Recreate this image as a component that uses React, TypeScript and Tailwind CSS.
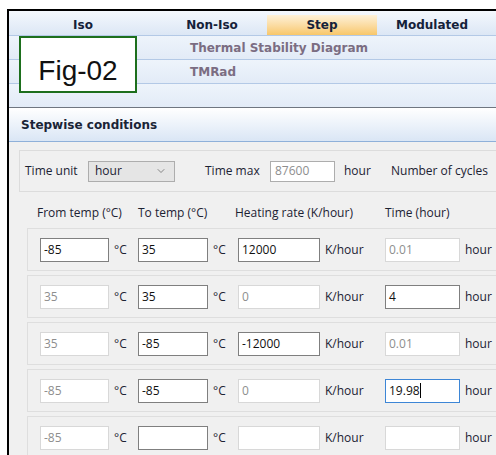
import React from "react";
import { ChevronDown } from "lucide-react";

type FieldState = "on" | "off" | "focus";

interface Field {
  value: string;
  state: FieldState;
}

interface StepRow {
  id: number;
  from: Field;
  to: Field;
  rate: Field;
  time: Field;
}

const f = (value: string, state: FieldState): Field => ({ value, state });

const steps: StepRow[] = [
  { id: 1, from: f("-85", "on"), to: f("35", "on"), rate: f("12000", "on"), time: f("0.01", "off") },
  { id: 2, from: f("35", "off"), to: f("35", "on"), rate: f("0", "off"), time: f("4", "on") },
  { id: 3, from: f("35", "off"), to: f("-85", "on"), rate: f("-12000", "on"), time: f("0.01", "off") },
  { id: 4, from: f("-85", "off"), to: f("-85", "on"), rate: f("0", "off"), time: f("19.98", "focus") },
  { id: 5, from: f("-85", "off"), to: f("", "on"), rate: f("", "off"), time: f("", "off") },
];

const tabs = [
  { label: "Iso", width: "w-[148px]", active: false },
  { label: "Non-Iso", width: "w-[110px]", active: false },
  { label: "Step", width: "w-[110px]", active: true },
  { label: "Modulated", width: "w-[110px]", active: false },
];

const uiFont = "font-['Segoe_UI','Open_Sans',sans-serif]";
const boldFont = "font-['DejaVu_Sans',Verdana,sans-serif] font-bold";

function TextBox({ field, width }: { field: Field; width: string }) {
  const border =
    field.state === "focus"
      ? "border-[#3d86d6]"
      : field.state === "on"
      ? "border-[#7f7f7f]"
      : "border-[#d8d8d8]";
  const color = field.state === "off" ? "text-[#8e8e8e]" : "text-[#111]";
  return (
    <div className={`${width} h-6 shrink-0 border ${border} bg-white flex items-center pl-[3px] text-[12px] ${color}`}>
      <span>{field.value}</span>
      {field.state === "focus" && <span className="w-px h-[15px] bg-black" />}
    </div>
  );
}

function Unit({ text, width }: { text: string; width: string }) {
  return <div className={`${width} shrink-0 pl-[5px] text-[12px] text-[#1c2233]`}>{text}</div>;
}

export default function App() {
  return (
    <div className={`w-[496px] h-[455px] overflow-hidden bg-white pl-[7px] pt-[9px] ${uiFont}`}>
      <div className="relative h-full border-l-2 border-t-2 border-black bg-[#f0f0f0]">
        {/* tab strip */}
        <div className="flex h-6 pt-1 bg-gradient-to-b from-[#f4f8fd] to-[#dce7f5]">
          {tabs.map((t) => (
            <div
              key={t.label}
              className={`${t.width} h-5 flex items-center justify-center text-[12px] text-[#15223a] ${boldFont} ${
                t.active ? "bg-gradient-to-b from-[#fdf1d8] to-[#f8c769]" : ""
              }`}
            >
              {t.label}
            </div>
          ))}
        </div>

        {/* diagram list */}
        {["Thermal Stability Diagram", "TMRad", ""].map((label, i) => (
          <div
            key={i}
            className="h-6 border-t border-[#b3c9e6] bg-gradient-to-b from-[#eef4fb] to-[#e2ebf7] pl-[181px] flex items-center"
          >
            <span className={`text-[12px] text-[#7b6d82] ${boldFont}`}>{label}</span>
          </div>
        ))}

        {/* section header */}
        <div className="h-[35px] border-t border-[#6f7680] border-b border-b-[#8fb0d9] bg-gradient-to-b from-white to-[#dae6f5] pl-3 flex items-center">
          <span className={`text-[12px] text-[#1a2436] ${boldFont}`}>Stepwise conditions</span>
        </div>

        {/* time settings */}
        <div className="ml-[10px] mt-2 w-[520px] h-[42px] border border-[#dcdcdc] flex items-center pl-[5px] text-[12px] text-[#1c2233]">
          <span className="w-[63px] shrink-0">Time unit</span>
          <div className="w-[87px] h-[21px] shrink-0 border border-[#adadad] bg-[#e5e5e5] flex items-center justify-between pl-[6px] pr-[7px]">
            <span>hour</span>
            <ChevronDown size={12} strokeWidth={1.5} className="text-[#666]" />
          </div>
          <span className="ml-[30px] w-[65px] shrink-0">Time max</span>
          <div className="w-[65px] h-[21px] shrink-0 border border-[#adadad] bg-white flex items-center pl-[4px] text-[#8e8e8e]">
            87600
          </div>
          <span className="ml-[9px] w-[47px] shrink-0">hour</span>
          <span className="shrink-0">Number of cycles</span>
        </div>

        {/* column headings */}
        <div className="flex mt-3 h-[18px] items-center pl-[28px] text-[12px] text-[#1c2233]">
          <span className="w-[101px] shrink-0">From temp (°C)</span>
          <span className="w-[97px] shrink-0">To temp (°C)</span>
          <span className="w-[150px] shrink-0">Heating rate (K/hour)</span>
          <span className="shrink-0">Time (hour)</span>
        </div>

        {/* step rows */}
        <div className="mt-[6px] ml-[18px] flex flex-col gap-1">
          {steps.map((s) => (
            <div key={s.id} className="w-[520px] h-[43px] shrink-0 border border-[#dedede] flex items-center pl-[12px]">
              <TextBox field={s.from} width="w-[69px]" />
              <Unit text="°C" width="w-[29px]" />
              <TextBox field={s.to} width="w-[70px]" />
              <Unit text="°C" width="w-[30px]" />
              <TextBox field={s.rate} width="w-[82px]" />
              <Unit text="K/hour" width="w-[65px]" />
              <TextBox field={s.time} width="w-[75px]" />
              <Unit text="hour" width="w-[40px]" />
            </div>
          ))}
        </div>

        {/* figure label */}
        <div className="absolute left-[10px] top-[25px] w-[118px] h-[57px] border-2 border-[#1d6f1d] bg-white flex justify-center pt-[19px]">
          <span className="font-['Liberation_Sans',Arial,sans-serif] text-[28px] leading-none text-[#111]">Fig-02</span>
        </div>
      </div>
    </div>
  );
}
